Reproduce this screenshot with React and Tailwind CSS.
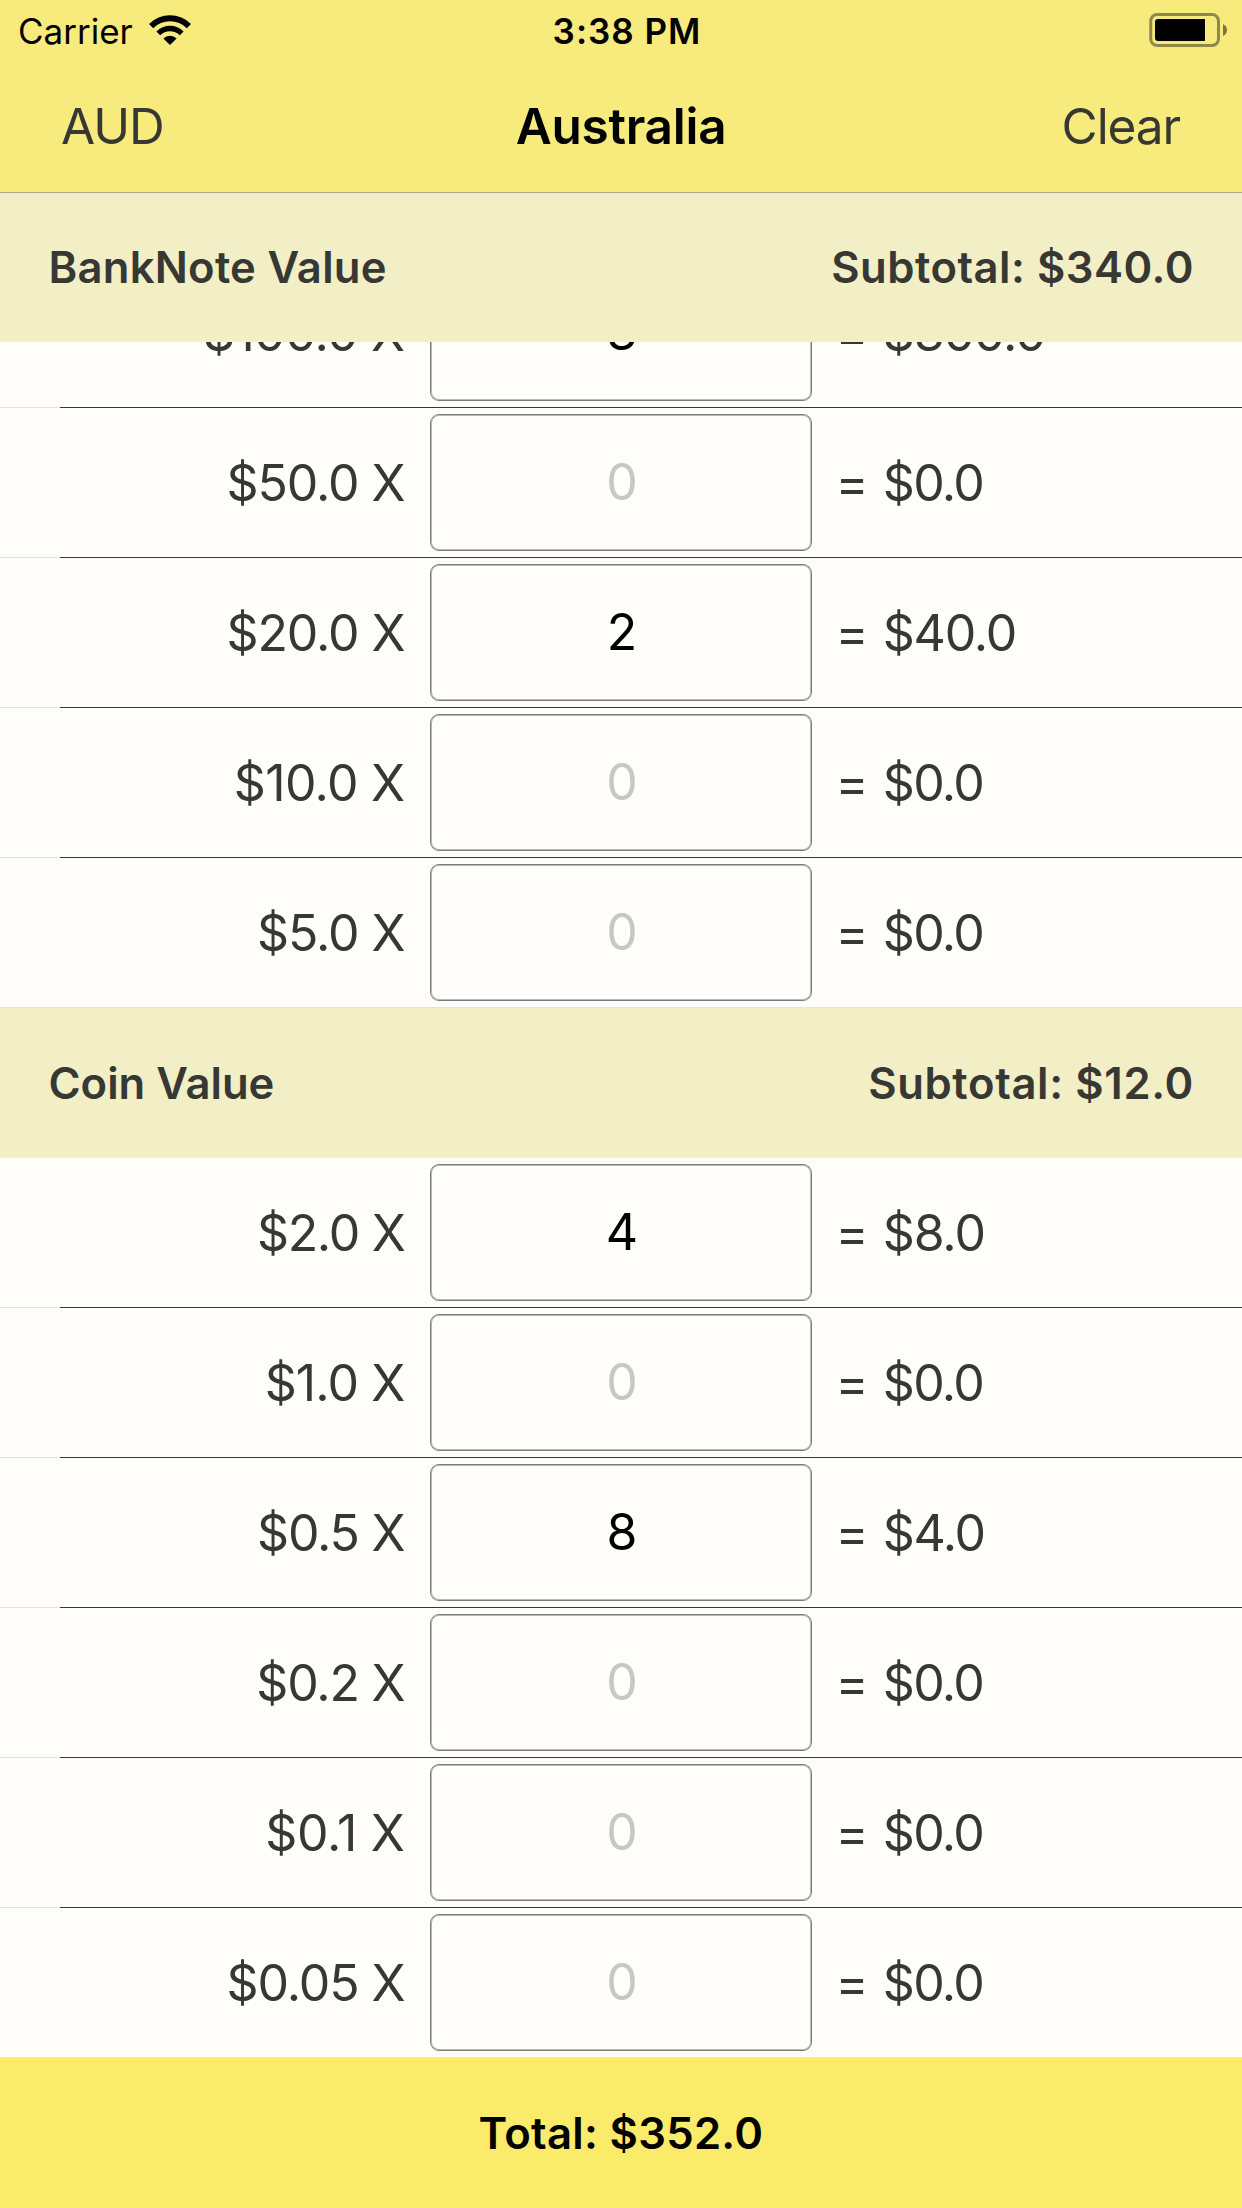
const banknotes = [
  { unit: '$100.0 X', count: '3', sum: '$300.0', unitTrack: 'tracking-[-0.7px]', sumTrack: 'tracking-[-1.1px]' },
  { unit: '$50.0 X', count: '', sum: '$0.0', unitTrack: 'tracking-[-1.1px]', sumTrack: 'tracking-[-1.6px]' },
  { unit: '$20.0 X', count: '2', sum: '$40.0', unitTrack: 'tracking-[-1.1px]', sumTrack: 'tracking-[-1.2px]' },
  { unit: '$10.0 X', count: '', sum: '$0.0', unitTrack: 'tracking-[-0.7px]', sumTrack: 'tracking-[-1.6px]' },
  { unit: '$5.0 X', count: '', sum: '$0.0', unitTrack: 'tracking-[-1.1px]', sumTrack: 'tracking-[-1.6px]' },
];

const coins = [
  { unit: '$2.0 X', count: '4', sum: '$8.0', unitTrack: 'tracking-[-1.3px]', sumTrack: 'tracking-[-1.1px]' },
  { unit: '$1.0 X', count: '', sum: '$0.0', unitTrack: 'tracking-[-0.9px]', sumTrack: 'tracking-[-1.6px]' },
  { unit: '$0.5 X', count: '8', sum: '$4.0', unitTrack: 'tracking-[-1.2px]', sumTrack: 'tracking-[-1.3px]' },
  { unit: '$0.2 X', count: '', sum: '$0.0', unitTrack: 'tracking-[-1.2px]', sumTrack: 'tracking-[-1.6px]' },
  { unit: '$0.1 X', count: '', sum: '$0.0', unitTrack: 'tracking-[-0.3px]', sumTrack: 'tracking-[-1.6px]' },
  { unit: '$0.05 X', count: '', sum: '$0.0', unitTrack: 'tracking-[-1.1px]', sumTrack: 'tracking-[-1.6px]' },
];

function WifiIcon() {
  return (
    <svg width="42" height="30" viewBox="0 0 42 30" className="ml-[16px]">
      <path d="M0 9A29.7 29.7 0 0 1 42 9L37.8 13.2A23.7 23.7 0 0 0 4.2 13.2Z" />
      <path d="M7.4 16.4A19.3 19.3 0 0 1 34.6 16.4L30.8 20.2A13.9 13.9 0 0 0 11.2 20.2Z" />
      <path d="M14.4 23.4A9.4 9.4 0 0 1 27.6 23.4L21 30Z" />
    </svg>
  );
}

function BatteryIcon() {
  return (
    <svg width="79" height="34" viewBox="0 0 79 34">
      <rect x="2.75" y="1.5" width="67.75" height="31" rx="6.5" fill="none" stroke="#000" strokeOpacity="0.42" strokeWidth="3" />
      <path d="M10 6H57V28H10Q7 28 7 25V9Q7 6 10 6Z" />
      <path d="M75 11Q79 13 79 17Q79 21 75 23Z" fillOpacity="0.5" />
    </svg>
  );
}

function StatusBar() {
  return (
    <div className="grid h-[60px] grid-cols-3 items-center text-[35px] text-black">
      <div className="flex items-center pl-[18px]">
        <span className="pt-[3px]">Carrier</span>
        <WifiIcon />
      </div>
      <div className="pt-[3px] pl-[12px] text-center font-semibold tracking-[1px]">3:38 PM</div>
      <div className="flex justify-end pr-[15px]">
        <BatteryIcon />
      </div>
    </div>
  );
}

function NavBar() {
  return (
    <div className="grid h-[132px] grid-cols-3 items-center pt-px text-[49.5px]">
      <div className="pl-[61px] tracking-[-1px]">AUD</div>
      <div className="text-center font-semibold tracking-[-0.25px] text-black">Australia</div>
      <div className="pr-[62px] text-right tracking-[-1.1px]">Clear</div>
    </div>
  );
}

function SectionHeader({ title, subtotal, titleTrack, subtotalTrack, className }) {
  return (
    <div className={`flex shrink-0 items-center justify-between bg-[#f2eec6] pt-px pr-[48px] pl-[48.5px] text-[43.6px] font-semibold ${className}`}>
      <h2 className={titleTrack}>{title}</h2>
      <div className={subtotalTrack}>{subtotal}</div>
    </div>
  );
}

function Row({ row, last }) {
  return (
    <div className="flex h-[150px] shrink-0 flex-col bg-[#fffefa]">
      <div className="flex h-[149px] items-center text-[50px]">
        <div className={`w-[404.5px] pt-px text-right whitespace-nowrap ${row.unitTrack}`}>{row.unit}</div>
        <div className="ml-[25.5px] flex h-[137px] w-[382px] items-center justify-center rounded-[9px] border border-[#7c7c7c] pb-[2px] pl-[2px] inset-shadow-[0_0_0_1px_#b8b8b6]">
          {row.count ? <span className="text-black">{row.count}</span> : <span className="text-[#c7c7c7]">0</span>}
        </div>
        <div className="ml-[23.5px] pt-px whitespace-nowrap">
          = <span className={row.sumTrack}>{row.sum}</span>
        </div>
      </div>
      <div className="flex h-px bg-[#fbec75]">
        {!last && <div className="ml-[60px] flex-1 bg-[#373733]" />}
      </div>
    </div>
  );
}

export default function App() {
  return (
    <div className="flex h-[2208px] w-[1242px] flex-col overflow-hidden bg-[#fffefa] font-['Inter',sans-serif] leading-none text-[#373733]">
      <header className="h-[193px] shrink-0 border-b border-[#aaa68c] bg-[#f8eb7e]">
        <StatusBar />
        <NavBar />
      </header>

      <SectionHeader
        title="BankNote Value"
        subtotal="Subtotal: $340.0"
        titleTrack="tracking-[0.25px]"
        subtotalTrack="tracking-[0.5px]"
        className="h-[149px]"
      />
      <div className="flex h-[666px] shrink-0 flex-col justify-end overflow-hidden">
        {banknotes.map((row, i) => (
          <Row key={row.unit} row={row} last={i === banknotes.length - 1} />
        ))}
      </div>

      <SectionHeader
        title="Coin Value"
        subtotal="Subtotal: $12.0"
        titleTrack="tracking-[0px]"
        subtotalTrack="tracking-[0.65px]"
        className="h-[150px]"
      />
      <div className="flex shrink-0 flex-col">
        {coins.map((row, i) => (
          <Row key={row.unit} row={row} last={i === coins.length - 1} />
        ))}
      </div>

      <footer className="flex h-[150px] shrink-0 items-center justify-center bg-[#fbeb6a] pt-px text-[43.6px] font-semibold tracking-[0.3px] text-black">
        Total: $352.0
      </footer>
    </div>
  );
}
